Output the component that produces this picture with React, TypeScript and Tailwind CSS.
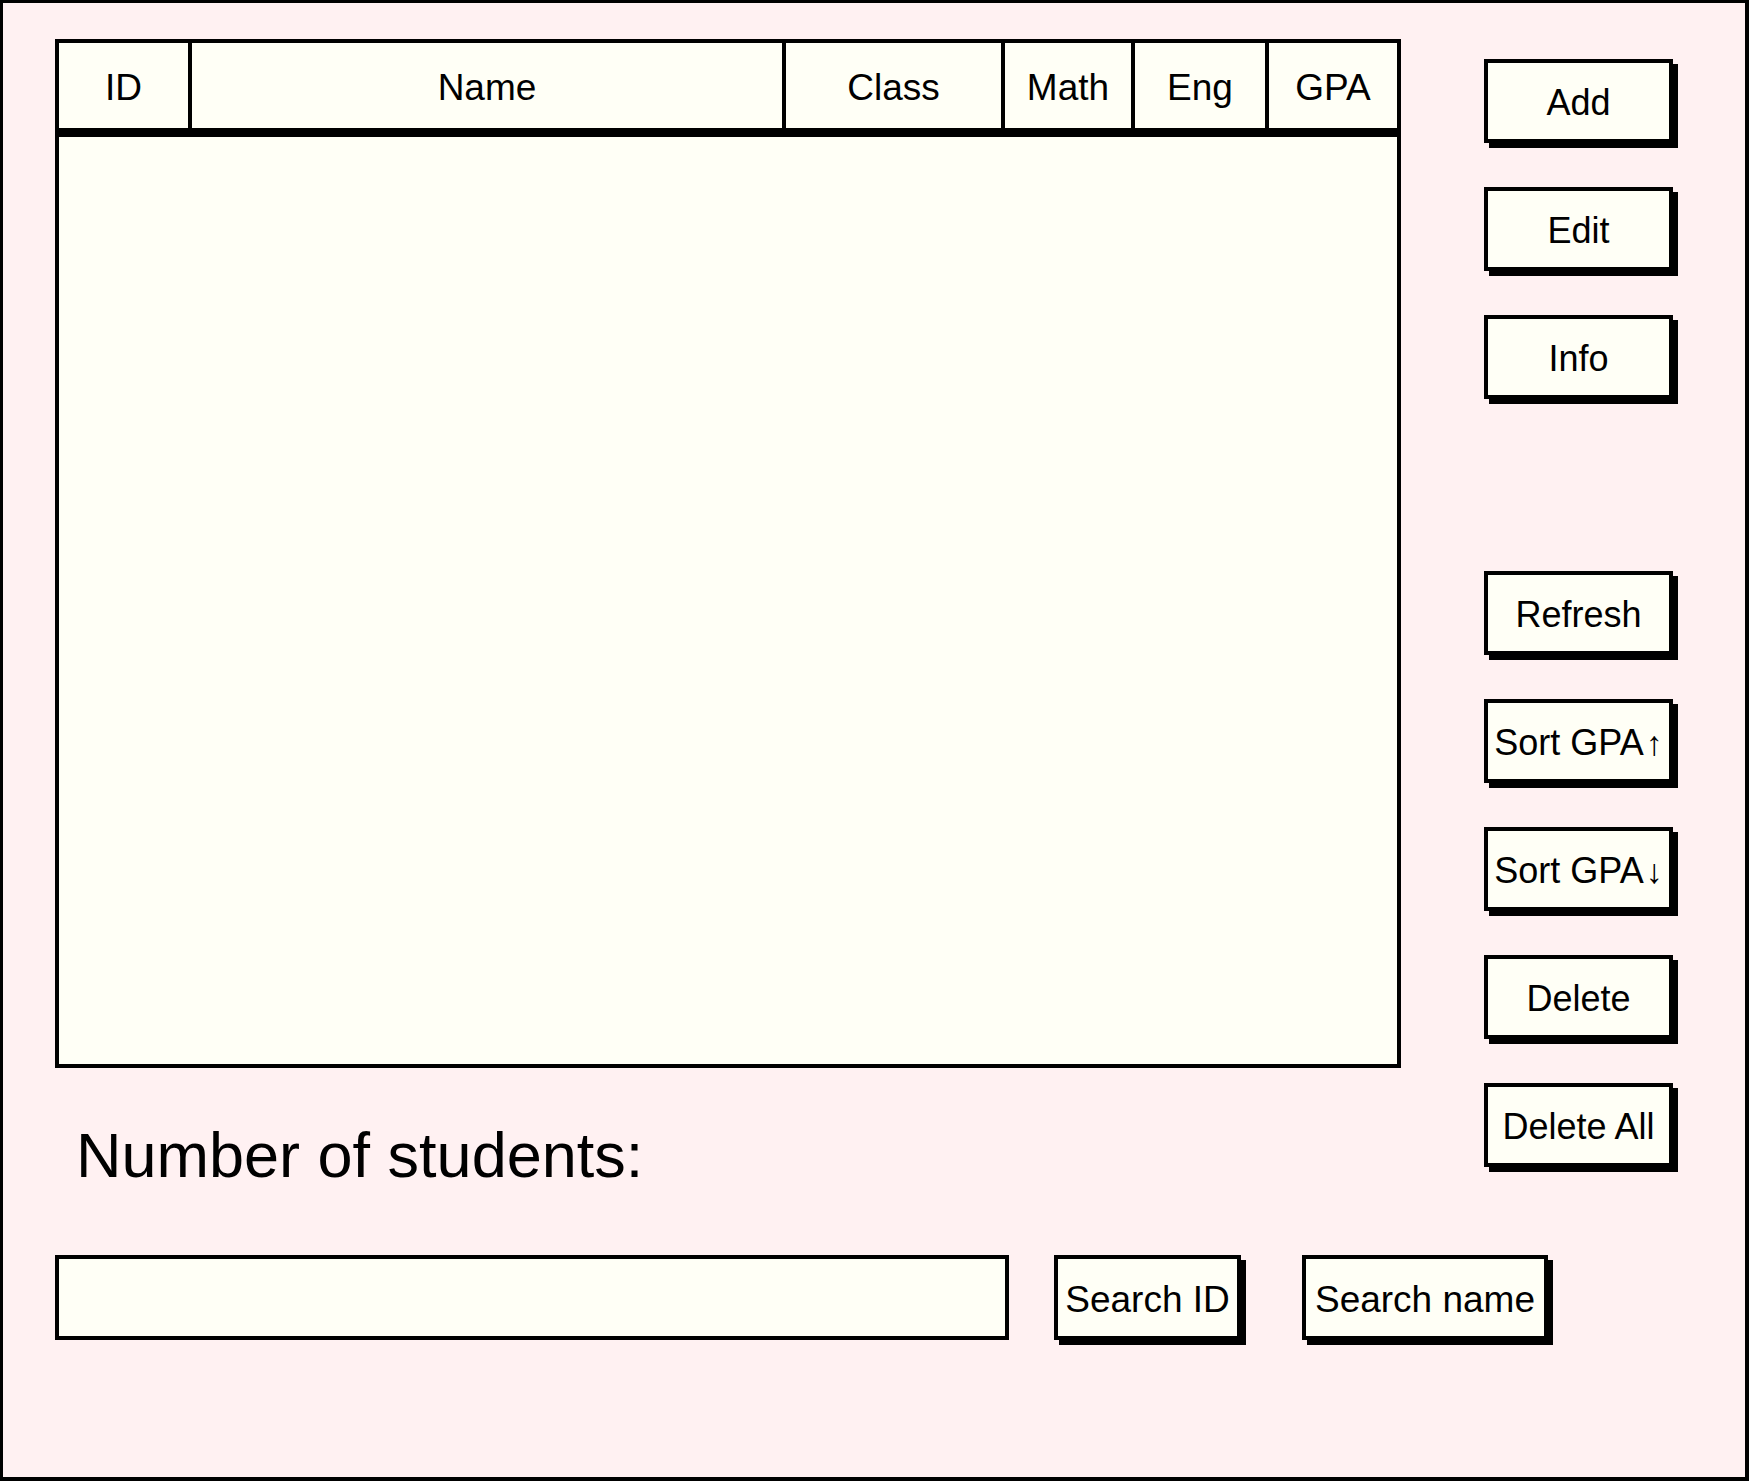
import React from 'react';

const columns = [
  { label: 'ID', border: true },
  { label: 'Name', border: true },
  { label: 'Class', border: true },
  { label: 'Math', border: true },
  { label: 'Eng', border: true },
  { label: 'GPA', border: false },
];

const SideButton = ({ children }: { children: React.ReactNode }) => (
  <button className="flex h-[84px] w-[189px] items-center justify-center whitespace-nowrap border-4 border-black bg-[#fffff6] pt-1 text-[36px] text-black shadow-[5px_5px_0_0_#000]">
    {children}
  </button>
);

const App = () => {
  return (
    <div
      className="h-screen w-full border-b-4 border-l-[3px] border-r-4 border-t-[3px] border-black bg-[#fff1f2] pl-[52px] pt-[36px] text-black"
      style={{ fontFamily: '"Liberation Sans", Arial, sans-serif' }}
    >
      <div className="flex items-start">
        <div className="flex flex-col">
          <div className="flex h-[1029px] w-[1346px] flex-col border-4 border-black bg-[#fffff6]">
            <div className="grid h-[94px] grid-cols-[133px_594px_219px_130px_134px_128px] border-b-[9px] border-black">
              {columns.map((col) => (
                <div
                  key={col.label}
                  className={`flex items-center justify-center pt-[5px] text-[37px] ${col.border ? 'border-r-4 border-black' : ''}`}
                >
                  {col.label}
                </div>
              ))}
            </div>
            <div className="flex-1" />
          </div>
          <p className="ml-[21px] mt-[56px] text-[63px] leading-none">Number of students:</p>
        </div>

        <div className="ml-[83px] mt-[20px] flex flex-col gap-[44px]">
          <SideButton>Add</SideButton>
          <SideButton>Edit</SideButton>
          <SideButton>Info</SideButton>
          <div className="h-[84px]" />
          <SideButton>Refresh</SideButton>
          <SideButton>
            Sort GPA<span className="ml-0.5 text-[34px]">↑</span>
          </SideButton>
          <SideButton>
            Sort GPA<span className="ml-0.5 text-[34px]">↓</span>
          </SideButton>
          <SideButton>Delete</SideButton>
          <SideButton>Delete All</SideButton>
        </div>
      </div>

      <div className="mt-[68px] flex items-start">
        <input
          type="text"
          className="h-[85px] w-[954px] border-4 border-black bg-[#fffff6] px-3 text-[36px] outline-none"
        />
        <button className="ml-[45px] flex h-[85px] w-[187px] items-center justify-center whitespace-nowrap border-4 border-black bg-[#fffff6] pt-1 text-[37px] shadow-[5px_5px_0_0_#000]">
          Search ID
        </button>
        <button className="ml-[61px] flex h-[85px] w-[246px] items-center justify-center whitespace-nowrap border-4 border-black bg-[#fffff6] pt-1 text-[37px] shadow-[5px_5px_0_0_#000]">
          Search name
        </button>
      </div>
    </div>
  );
};

export default App;
